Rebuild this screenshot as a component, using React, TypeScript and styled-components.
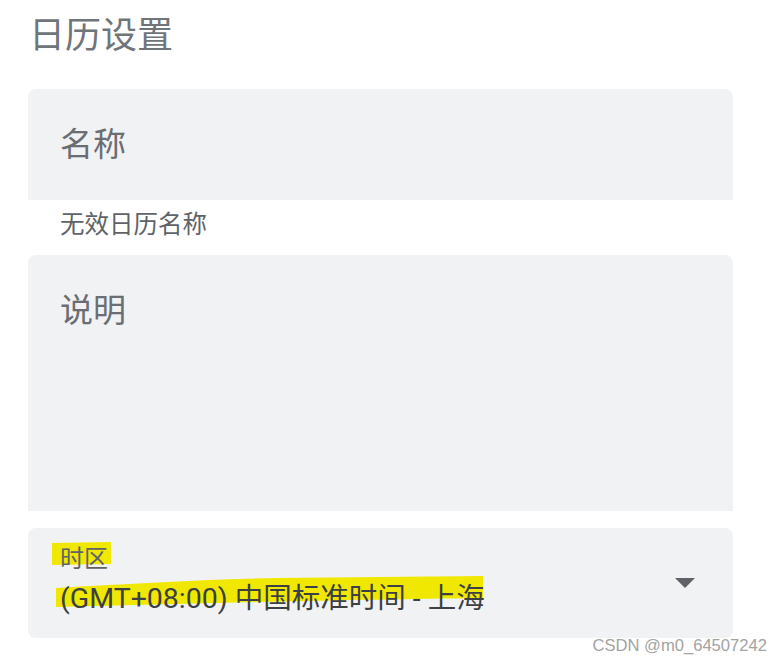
import React from 'react';
import styled, {createGlobalStyle} from 'styled-components';

const GlobalStyle = createGlobalStyle`
  html, body {
    margin: 0;
    padding: 0;
    background: #ffffff;
  }
  body {
    font-family: Roboto, "Noto Sans CJK SC", sans-serif;
  }
`

const Page = styled.div`
  position: relative;
  width: 782px;
  height: 664px;
  box-sizing: border-box;
  padding: 12px 49px 0 28px;
  display: flex;
  flex-direction: column;
  overflow: hidden;
`

const Title = styled.h1`
  margin: 0 0 0 1px;
  font-size: 36px;
  font-weight: 400;
  line-height: 48px;
  color: #70757a;
`

const Gap = styled.div<{ h: number }>`
  height: ${props => props.h}px;
  flex-shrink: 0;
`

const Field = styled.div<{ h: number, rounded?: boolean }>`
  position: relative;
  height: ${props => props.h}px;
  flex-shrink: 0;
  box-sizing: border-box;
  background: #f1f2f4;
  border-radius: ${props => props.rounded ? '8px' : '8px 8px 0 0'};
  padding: 0 32px;
  display: flex;
  flex-direction: column;
`

const Placeholder = styled.div`
  margin-top: 36px;
  font-size: 33px;
  line-height: 40px;
  color: #6a6e73;
`

const Helper = styled.div`
  padding: 10px 32px 0;
  height: 55px;
  flex-shrink: 0;
  box-sizing: border-box;
  font-size: 24.5px;
  line-height: 30px;
  color: #5f6368;
`

const Label = styled.span`
  position: relative;
  align-self: flex-start;
  font-size: 24px;
  line-height: 28px;
  color: #5f6368;
`

const Value = styled.span`
  position: relative;
  align-self: flex-start;
  margin-top: 8px;
  font-size: 28.5px;
  line-height: 36px;
  color: #3c4043;
`

// hand-drawn yellow marker behind the text
const Marker = styled.svg<{ x: number, y: number }>`
  position: absolute;
  left: ${props => props.x}px;
  top: ${props => props.y}px;
  z-index: 0;
`

const Text = styled.span`
  position: relative;
  z-index: 1;
`

const Arrow = styled.div`
  position: absolute;
  right: 38px;
  top: 50px;
  width: 0;
  height: 0;
  border-left: 10px solid transparent;
  border-right: 10px solid transparent;
  border-top: 10px solid #5f6368;
`

const Watermark = styled.div`
  position: absolute;
  right: 15px;
  bottom: 8px;
  font-family: "Liberation Sans", Arial, sans-serif;
  font-size: 16.6px;
  color: #a3a3a3;
`

export default function App() {
    return (
        <Page>
            <GlobalStyle/>
            <Title>日历设置</Title>
            <Gap h={29}/>
            <Field h={111}>
                <Placeholder>名称</Placeholder>
            </Field>
            <Helper>无效日历名称</Helper>
            <Field h={256}>
                <Placeholder>说明</Placeholder>
            </Field>
            <Gap h={17}/>
            <Field h={110} rounded>
                <Gap h={17}/>
                <Label>
                    <Marker x={-8} y={-3} width="60" height="24" viewBox="0 0 60 24">
                        <path d="M0 1 L59 0 L59 22 L0 23 Z" fill="#f0e800"/>
                    </Marker>
                    <Text>时区</Text>
                </Label>
                <Value>
                    <Marker x={-4} y={-5} width="428" height="32" viewBox="0 0 428 32">
                        <path d="M0 12 C70 8 140 4 220 2 L427 0 L427 22 C350 23 300 24 200 26 L0 31 Z" fill="#f0e800"/>
                    </Marker>
                    <Text>(GMT+08:00) 中国标准时间 - 上海</Text>
                </Value>
                <Arrow/>
            </Field>
            <Watermark>CSDN @m0_64507242</Watermark>
        </Page>
    );
}
